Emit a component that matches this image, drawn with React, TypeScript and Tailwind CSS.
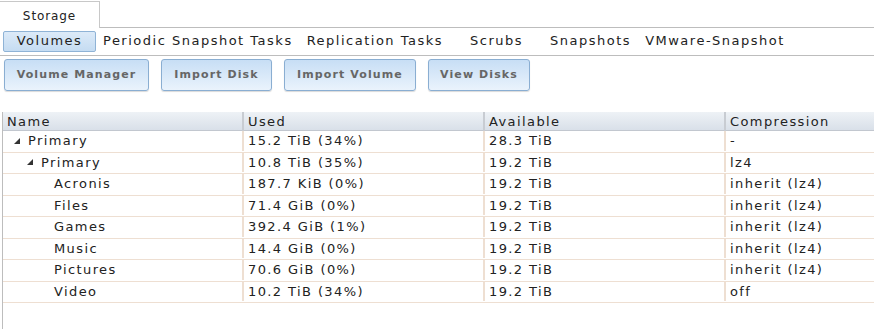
import React from "react";

const subTabs = [
  { label: "Volumes", active: true },
  { label: "Periodic Snapshot Tasks" },
  { label: "Replication Tasks" },
  { label: "Scrubs" },
  { label: "Snapshots" },
  { label: "VMware-Snapshot" },
];

const actions = [
  { label: "Volume Manager", w: "w-[145px]" },
  { label: "Import Disk", w: "w-[111px]" },
  { label: "Import Volume", w: "w-[132px]" },
  { label: "View Disks", w: "w-[102px]" },
];

const rows = [
  { name: "Primary", level: 0, used: "15.2 TiB (34%)", avail: "28.3 TiB", comp: "-" },
  { name: "Primary", level: 1, used: "10.8 TiB (35%)", avail: "19.2 TiB", comp: "lz4" },
  { name: "Acronis", level: 2, used: "187.7 KiB (0%)", avail: "19.2 TiB", comp: "inherit (lz4)" },
  { name: "Files", level: 2, used: "71.4 GiB (0%)", avail: "19.2 TiB", comp: "inherit (lz4)" },
  { name: "Games", level: 2, used: "392.4 GiB (1%)", avail: "19.2 TiB", comp: "inherit (lz4)" },
  { name: "Music", level: 2, used: "14.4 GiB (0%)", avail: "19.2 TiB", comp: "inherit (lz4)" },
  { name: "Pictures", level: 2, used: "70.6 GiB (0%)", avail: "19.2 TiB", comp: "inherit (lz4)" },
  { name: "Video", level: 2, used: "10.2 TiB (34%)", avail: "19.2 TiB", comp: "off" },
];

function Caret() {
  return (
    <svg width="6" height="6" viewBox="0 0 6 6" className="shrink-0">
      <polygon points="6,0 6,6 0,6" fill="#333" />
    </svg>
  );
}

export default function App() {
  return (
    <div className="h-[329px] w-[874px] overflow-hidden bg-white font-['DejaVu_Sans',sans-serif] text-[13px] tracking-[1.4px] text-[#222]">
      {/* top tab */}
      <div className="flex h-[28px] items-end">
        <div className="flex h-[27px] w-[100px] items-center justify-center border-r border-t border-[#c8c8c8] pt-[2px] text-[12px] tracking-[0.9px]">
          Storage
        </div>
        <div className="h-px flex-1 bg-[#bdbdbd]" />
      </div>

      {/* sub tabs */}
      <div className="flex h-[28px] items-center border-b border-[#bdbdbd] pb-[1px] pl-[3px] tracking-[1.5px]">
        {subTabs.map((t) =>
          t.active ? (
            <div
              key={t.label}
              className="flex h-[21px] min-w-[93px] items-center justify-center rounded-[2px] border border-[#8fb3d6] bg-gradient-to-b from-[#dceaf8] to-[#c5dcf2] px-[7px]"
            >
              {t.label}
            </div>
          ) : (
            <div key={t.label} className="flex min-w-[93px] justify-center px-[7px]">
              {t.label}
            </div>
          )
        )}
      </div>

      {/* action buttons */}
      <div className="flex gap-[12px] pl-[4px] pt-[3px]">
        {actions.map((a) => (
          <div
            key={a.label}
            className={`flex h-[32px] items-center justify-center rounded-[3px] border border-[#8aaed2] bg-gradient-to-b from-[#c7def5] to-[#eaf3fc] text-[11px] font-bold tracking-[1.1px] text-[#666] shadow-[0_1px_1px_rgba(0,0,0,0.15)] ${a.w}`}
          >
            {a.label}
          </div>
        ))}
      </div>

      {/* table */}
      <div className="ml-[2px] mt-[21px] h-[220px] border-l border-[#bdbdbd]">
        <div className="grid h-[19px] grid-cols-[239px_241px_241px_1fr] border-b border-[#c2c7cf] bg-gradient-to-b from-[#eef2f6] to-[#d9e0e9]">
          {["Name", "Used", "Available", "Compression"].map((h, i) => (
            <div
              key={h}
              className={`flex items-center pl-[4px] ${i > 0 ? "border-l-2 border-[#c8ccd2]" : ""}`}
            >
              {h}
            </div>
          ))}
        </div>
        {rows.map((r, idx) => (
          <div
            key={idx}
            className="grid h-[21.5px] grid-cols-[239px_241px_241px_1fr] border-b border-[#eedfd2] pb-[1px]"
          >
            <div
              className={`flex items-center gap-[8px] ${
                r.level === 0 ? "pl-[11px]" : r.level === 1 ? "pl-[24px]" : "pl-[51px]"
              }`}
            >
              {r.level < 2 && <Caret />}
              {r.name}
            </div>
            <div className="flex items-center border-l-2 border-[#eedfd2] pl-[4px]">{r.used}</div>
            <div className="flex items-center border-l-2 border-[#eedfd2] pl-[4px]">{r.avail}</div>
            <div className="flex items-center border-l-2 border-[#eedfd2] pl-[4px]">{r.comp}</div>
          </div>
        ))}
      </div>
    </div>
  );
}
